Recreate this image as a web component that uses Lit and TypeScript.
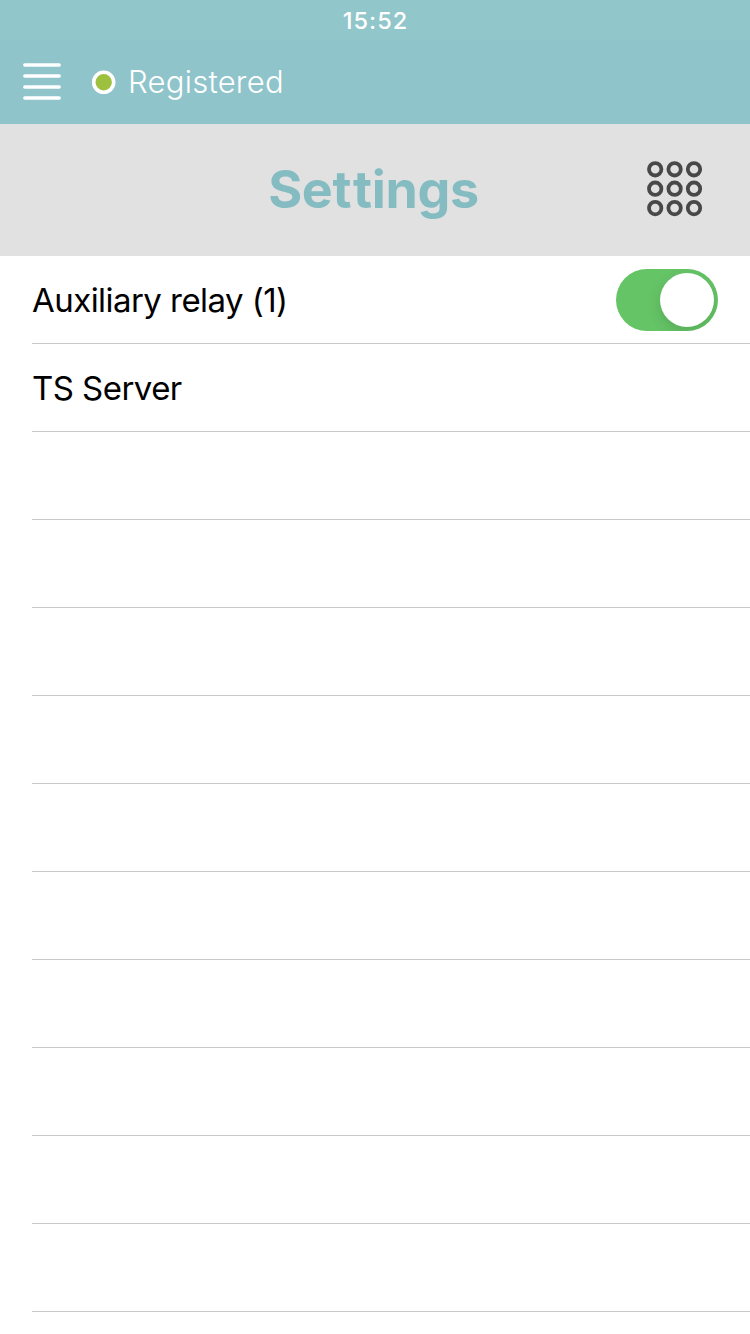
import { LitElement, html, css, svg } from "lit";
import { customElement, state } from "lit/decorators.js";

@customElement("app-root")
export class AppRoot extends LitElement {
  @state() private relayOn = true;

  private rows = ["Auxiliary relay (1)", "TS Server", ...Array(10).fill("")];

  static styles = css`
    :host {
      display: flex;
      flex-direction: column;
      height: 1334px;
      overflow: hidden;
      background: #fff;
      color: #000;
      font-family: Inter, "Liberation Sans", sans-serif;
    }
    .status {
      height: 40px;
      line-height: 42px;
      padding-left: 1px;
      text-align: center;
      font-size: 23.5px;
      font-weight: 550;
      letter-spacing: 1px;
      color: #fff;
      background: #91c6ca;
    }
    .nav {
      display: flex;
      align-items: center;
      height: 84px;
      box-sizing: border-box;
      padding-left: 22px;
      background: #90c4cb;
      color: #fff;
    }
    .menu { width: 40px; height: 84px; }
    .dot { width: 26px; height: 84px; margin-left: 29px; }
    .state {
      margin-left: 11px;
      font-size: 31px;
      font-weight: 340;
      line-height: 84px;
      letter-spacing: 0.25px;
      white-space: nowrap;
    }
    .title-bar {
      display: grid;
      grid-template-columns: 150px 1fr 150px;
      height: 132px;
      align-items: center;
      background: #e1e1e1;
    }
    .title {
      grid-column: 2;
      margin: 0 3px 0 0;
      text-align: center;
      font-size: 52px;
      font-weight: 700;
      height: 132px;
      line-height: 131px;
      letter-spacing: -0.35px;
      color: #84bcc2;
    }
    .loose { letter-spacing: 1.6px; }
    .pad { width: 60px; height: 132px; margin-left: 45px; }
    .row {
      display: flex;
      align-items: center;
      justify-content: space-between;
      height: 88px;
      box-sizing: border-box;
      margin-left: 32px;
      padding-right: 32px;
      border-bottom: 1px solid #c8c7cc;
      font-size: 33px;
      letter-spacing: -0.55px;
      white-space: nowrap;
    }
    .switch {
      display: flex;
      justify-content: flex-end;
      width: 102px;
      height: 62px;
      box-sizing: border-box;
      padding: 4px;
      margin-top: 1px;
      border: 0;
      border-radius: 31px;
      background: #65c466;
      overflow: hidden;
    }
    .switch.off { justify-content: flex-start; background: #e9e9ea; }
    .knob {
      width: 54px;
      height: 54px;
      border-radius: 50%;
      background: #fff;
      box-shadow: 0 5px 14px rgba(0, 0, 0, 0.13);
    }
  `;

  render() {
    const steps = [0, 1, 2];
    return html`
      <div class="status">15:52</div>
      <div class="nav">
        <svg class="menu" viewBox="0 0 40 84" stroke="#fff" stroke-width="3.6" stroke-linecap="round">
          <path d="M2.9 25h34.2M2.9 36h34.2M2.9 47h34.2M2.9 58h34.2" />
        </svg>
        <svg class="dot" viewBox="0 0 26 84">
          <circle cx="12.7" cy="42.3" r="10" fill="#9dc03f" stroke="#fff" stroke-width="3.6" />
        </svg>
        <span class="state">Registered</span>
      </div>
      <div class="title-bar">
        <h1 class="title">Se<span class="loose">t</span>tings</h1>
        <svg class="pad" viewBox="0 0 60 132" fill="none" stroke="#484848" stroke-width="3.8">
          ${steps.map((r) => steps.map((c) =>
            svg`<circle cx=${10.2 + c * 19.4} cy=${45.3 + r * 19.4} r="6.2" />`))}
        </svg>
      </div>
      <div>
        ${this.rows.map((label, i) => html`
          <div class="row">
            <span class="label">${label}</span>
            ${i === 0 ? html`
              <button
                class="switch ${this.relayOn ? "" : "off"}"
                role="switch"
                aria-checked=${String(this.relayOn)}
                @click=${() => (this.relayOn = !this.relayOn)}
              ><span class="knob"></span></button>` : ""}
          </div>`)}
      </div>
    `;
  }
}
